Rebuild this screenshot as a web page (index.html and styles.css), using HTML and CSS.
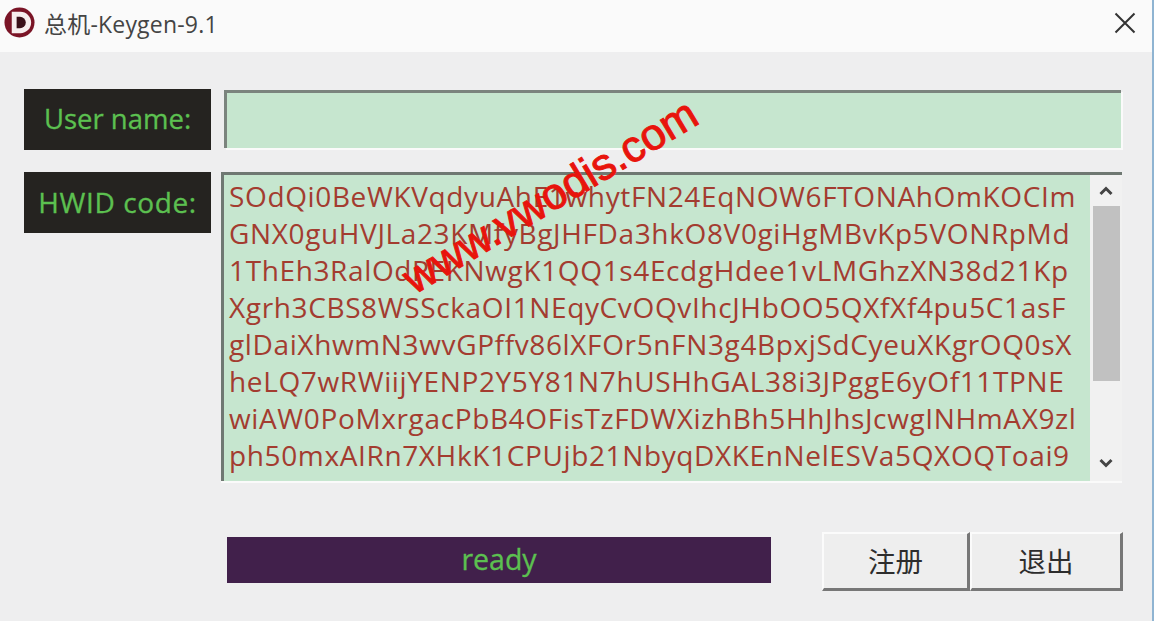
FILE: index.html
```html
<!DOCTYPE html>
<html lang="zh">
<head>
<meta charset="utf-8">
<title>总机-Keygen-9.1</title>
<link rel="stylesheet" href="styles.css">
</head>
<body>
<div class="window">
  <header class="titlebar">
    <svg class="logo" width="31" height="31" viewBox="0 0 32 32">
      <circle cx="16" cy="16" r="15.5" fill="#7a1426"/>
      <path d="M8 5h9a11 11 0 0 1 0 22H8z" fill="#f7eeee"/>
      <path d="M13 10h3.5a6 6 0 0 1 0 12H13z" fill="#3a1019"/>
    </svg>
    <span class="title">总机-Keygen-9.1</span>
    <svg class="close" width="22" height="22" viewBox="0 0 22 22">
      <path d="M1.5 1.5l19 19M20.5 1.5l-19 19" stroke="#333" stroke-width="2" fill="none"/>
    </svg>
  </header>
  <main class="content">
    <div class="row row-user">
      <div class="label label-user">User name:</div>
      <div class="input"></div>
    </div>
    <div class="row row-hwid">
      <div class="label label-hwid">HWID code:</div>
      <div class="textbox">
        <div class="code">
          <div>SOdQi0BeWKVqdyuAhE1whytFN24EqNOW6FTONAhOmKOCIm</div>
          <div>GNX0guHVJLa23KMfyBgJHFDa3hkO8V0giHgMBvKp5VONRpMd</div>
          <div>1ThEh3RalOdPEKNwgK1QQ1s4EcdgHdee1vLMGhzXN38d21Kp</div>
          <div>Xgrh3CBS8WSSckaOI1NEqyCvOQvIhcJHbOO5QXfXf4pu5C1asF</div>
          <div>glDaiXhwmN3wvGPffv86lXFOr5nFN3g4BpxjSdCyeuXKgrOQ0sX</div>
          <div>heLQ7wRWiijYENP2Y5Y81N7hUSHhGAL38i3JPggE6yOf11TPNE</div>
          <div>wiAW0PoMxrgacPbB4OFisTzFDWXizhBh5HhJhsJcwgINHmAX9zl</div>
          <div>ph50mxAIRn7XHkK1CPUjb21NbyqDXKEnNelESVa5QXOQToai9</div>
        </div>
        <div class="scrollbar">
          <svg class="arrow" width="14" height="10" viewBox="0 0 14 10"><path d="M1.5 8L7 2.5 12.5 8" stroke="#444" stroke-width="3" fill="none"/></svg>
          <div class="track"><div class="thumb"></div></div>
          <svg class="arrow" width="14" height="10" viewBox="0 0 14 10"><path d="M1.5 2L7 7.5 12.5 2" stroke="#444" stroke-width="3" fill="none"/></svg>
        </div>
      </div>
    </div>
    <div class="footer">
      <div class="status">ready</div>
      <div class="buttons">
        <button class="btn btn-reg">注册</button>
        <button class="btn btn-exit">退出</button>
      </div>
    </div>
  </main>
  <div class="watermark">www.vwodis.com</div>
</div>
</body>
</html>
```

FILE: styles.css
```css
* { box-sizing: border-box; }
html, body { margin: 0; padding: 0; }
body {
  width: 1154px;
  height: 621px;
  overflow: hidden;
  font-family: "Open Sans", "Noto Sans CJK SC", sans-serif;
  background: #f0f0f0;
}
.window {
  position: relative;
  width: 1154px;
  height: 621px;
  display: flex;
  flex-direction: column;
  border-right: 2px solid #8fb4d2;
  overflow: hidden;
}
.titlebar {
  height: 52px;
  flex: none;
  background: #fafafa;
  display: flex;
  align-items: center;
  padding: 0 16px 7px 4px;
}
.logo { flex: none; }
.title {
  margin-left: 9px;
  font-size: 23px;
  letter-spacing: 0.2px;
  color: #444;
}
.close { margin-left: auto; }
.content {
  flex: 1;
  display: flex;
  flex-direction: column;
  padding: 37px 29px 30px 24px;
  background: #eeeeef;
}
.row { display: flex; align-items: flex-start; }
.label {
  width: 187px;
  height: 61px;
  flex: none;
  background: #252320;
  color: #5cc050;
  font-size: 27.5px;
  -webkit-text-stroke: 0.3px #5cc050;
  display: flex;
  align-items: center;
  justify-content: center;
  padding-bottom: 2px;
  white-space: nowrap;
}
.label-hwid { font-size: 28px; letter-spacing: 0.6px; }
.input {
  margin-left: 13px;
  margin-top: 1px;
  width: 897px;
  height: 58px;
  background: #c6e6cf;
  border-top: 3px solid #7b847e;
  border-left: 3px solid #7b847e;
  box-shadow: 2px 2px 0 #fafafa;
}
.row-hwid { margin-top: 22px; }
.textbox {
  margin-left: 10px;
  width: 901px;
  height: 309px;
  display: flex;
  background: #c6e6cf;
  border-top: 3px solid #6f7872;
  border-left: 3px solid #6f7872;
  box-shadow: 0 2px 0 #fafafa;
}
.code {
  flex: 1;
  min-width: 0;
  padding: 3px 0 0 5px;
  font-size: 28px;
  letter-spacing: 0.63px;
  line-height: 37px;
  color: #a33c30;
  white-space: nowrap;
  overflow: hidden;
}
.scrollbar {
  width: 32px;
  flex: none;
  background: #f1f1f1;
  display: flex;
  flex-direction: column;
  align-items: center;
  padding: 11px 0 13px;
}
.arrow { flex: none; }
.track { flex: 1; width: 100%; padding: 10px 2px 77px 3px; }
.thumb { height: 100%; background: #c1c1c1; width: 27px; }
.footer {
  display: flex;
  align-items: center;
  margin-top: 51px;
  padding-left: 203px;
}
.status {
  width: 544px;
  height: 46px;
  margin-bottom: 4px;
  background: #41204b;
  color: #5cc050;
  font-size: 28.5px;
  -webkit-text-stroke: 0.3px #5cc050;
  display: flex;
  align-items: center;
  justify-content: center;
  padding-bottom: 2px;
}
.buttons { display: flex; margin-left: 51px; }
.btn {
  height: 59px;
  background: #eeeeee;
  border: 0;
  border-top: 2px solid #fbfbfb;
  border-left: 2px solid #fbfbfb;
  border-right: 3px solid #777;
  border-bottom: 3px solid #777;
  font-size: 27.5px;
  color: #2d2d2d;
  font-family: "Noto Sans CJK SC", sans-serif;
  padding: 0 0 3px;
}
.btn-reg { width: 148px; }
.btn-exit { width: 153px; }
.watermark {
  position: absolute;
  left: 380px;
  top: 172px;
  width: 340px;
  transform: rotate(-31deg);
  transform-origin: center;
  font-family: "Liberation Sans", sans-serif;
  font-size: 44px;
  line-height: 48px;
  color: #e8140c;
  white-space: nowrap;
  text-align: center;
  -webkit-text-stroke: 1px #e8140c;
}
```
